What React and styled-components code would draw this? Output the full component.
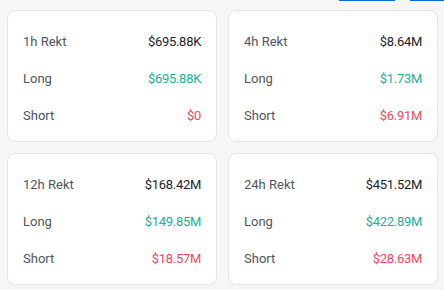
import styled, { createGlobalStyle } from "styled-components";

const stats = [
  { period: "1h", total: "$695.88K", long: "$695.88K", short: "$0" },
  { period: "4h", total: "$8.64M", long: "$1.73M", short: "$6.91M" },
  { period: "12h", total: "$168.42M", long: "$149.85M", short: "$18.57M" },
  { period: "24h", total: "$451.52M", long: "$422.89M", short: "$28.63M" },
];

const colors = {
  total: "#1e2329",
  long: "#21b09a",
  short: "#f6465d",
};

const App = () => {
  return (
    <>
      <GlobalStyle />
      <Page>
        <Toolbar>
          <TabButton $width={56} />
          <TabButton $width={34} />
        </Toolbar>
        <Grid>
          {stats.map((item) => (
            <Card key={item.period}>
              <Row>
                <Label>{item.period} Rekt</Label>
                <Value $tone='total'>{item.total}</Value>
              </Row>
              <Row>
                <Label>Long</Label>
                <Value $tone='long'>{item.long}</Value>
              </Row>
              <Row>
                <Label>Short</Label>
                <Value $tone='short'>{item.short}</Value>
              </Row>
            </Card>
          ))}
        </Grid>
      </Page>
    </>
  );
};

export default App;

const GlobalStyle = createGlobalStyle`
  body {
    margin: 0;
    background-color: #f6f6f6;
    font-family: Roboto, "Noto Sans", sans-serif;
  }
`;

const Page = styled.div`
  width: 444px;
  height: 290px;
  padding: 0 6px 0 7px;
  box-sizing: border-box;
  overflow: hidden;
`;

const Toolbar = styled.div`
  height: 1px;
  display: flex;
  justify-content: flex-end;
  gap: 15px;
  margin-right: -6px;
  margin-bottom: 9px;
  overflow: hidden;
`;

const TabButton = styled.div`
  width: ${(p) => p.$width}px;
  height: 1px;
  background-color: #0b6bd6;
`;

const Grid = styled.div`
  display: grid;
  grid-template-columns: 1fr 1fr;
  gap: 11px;
`;

const Card = styled.div`
  background-color: #fff;
  border: 1px solid #e4e6e8;
  border-radius: 8px;
  padding: 12px 15px 7px;
`;

const Row = styled.div`
  height: 37px;
  display: flex;
  align-items: center;
  justify-content: space-between;
`;

const Label = styled.span`
  font-size: 13px;
  color: #4f5560;
`;

const Value = styled.span`
  font-size: 13px;
  letter-spacing: -0.3px;
  color: ${(p) => colors[p.$tone]};
`;
